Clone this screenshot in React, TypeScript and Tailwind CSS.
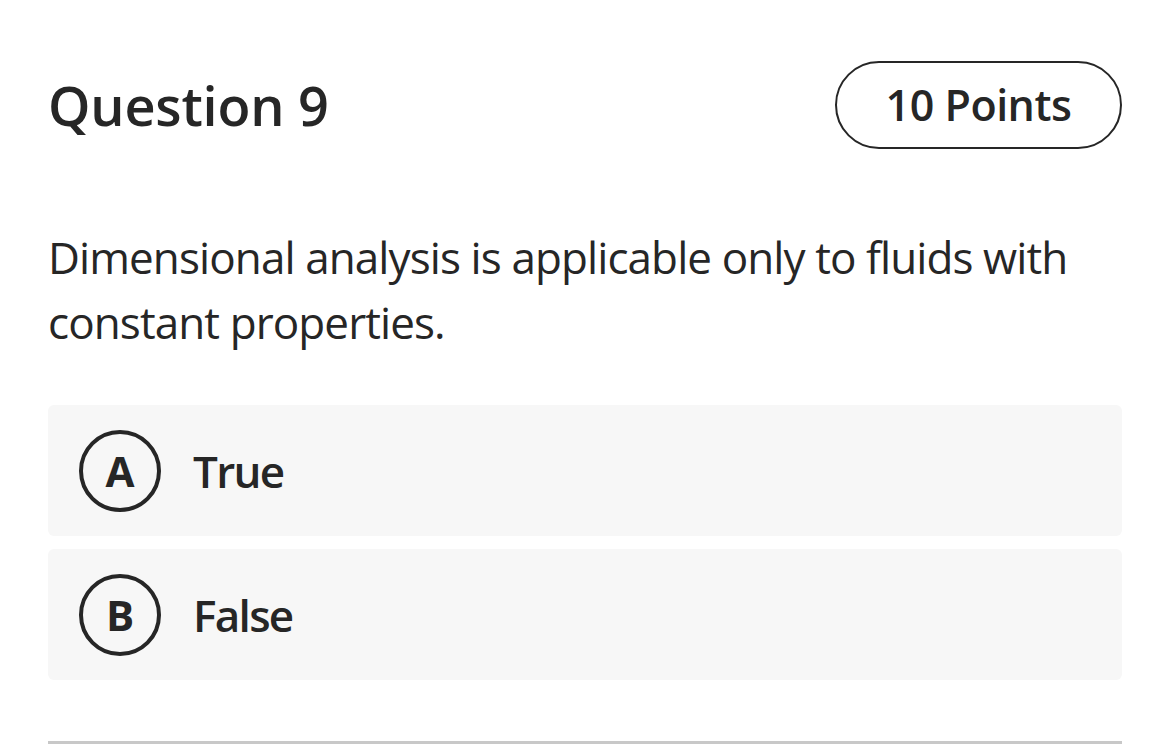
const options = [
  { letter: 'A', label: 'True' },
  { letter: 'B', label: 'False' },
]

export default function App() {
  return (
    <div className="min-h-[749px] bg-white px-12 text-[#262626]" style={{ fontFamily: '"Open Sans", sans-serif' }}>
      <div className="flex items-center justify-between pt-[61px]">
        <h1 className="text-[54px] font-semibold leading-none tracking-[-0.2px]">Question 9</h1>
        <div className="flex h-[88px] w-[287px] items-center justify-center rounded-full border-[2.5px] border-[#262626] text-[43px] font-semibold tracking-[-0.5px]">
          10 Points
        </div>
      </div>

      <p className="mt-[76px] text-[44px] leading-[65px] tracking-[-0.9px]">
        Dimensional analysis is applicable only to fluids with constant properties.
      </p>

      <div className="mt-[50px] flex flex-col gap-[13px]">
        {options.map((o) => (
          <div key={o.letter} className="flex h-[131px] items-center rounded-md bg-[#f7f7f7] pl-[31px]">
            <div className="flex h-[82px] w-[82px] items-center justify-center rounded-full border-[4.5px] border-[#262626] text-[42px] font-bold">
              {o.letter}
            </div>
            <span className="ml-[32px] text-[44px] font-semibold tracking-[-1.7px]">{o.label}</span>
          </div>
        ))}
      </div>

      <div className="mt-[61px] h-[3px] bg-[#c8c8c8]" />
    </div>
  )
}
